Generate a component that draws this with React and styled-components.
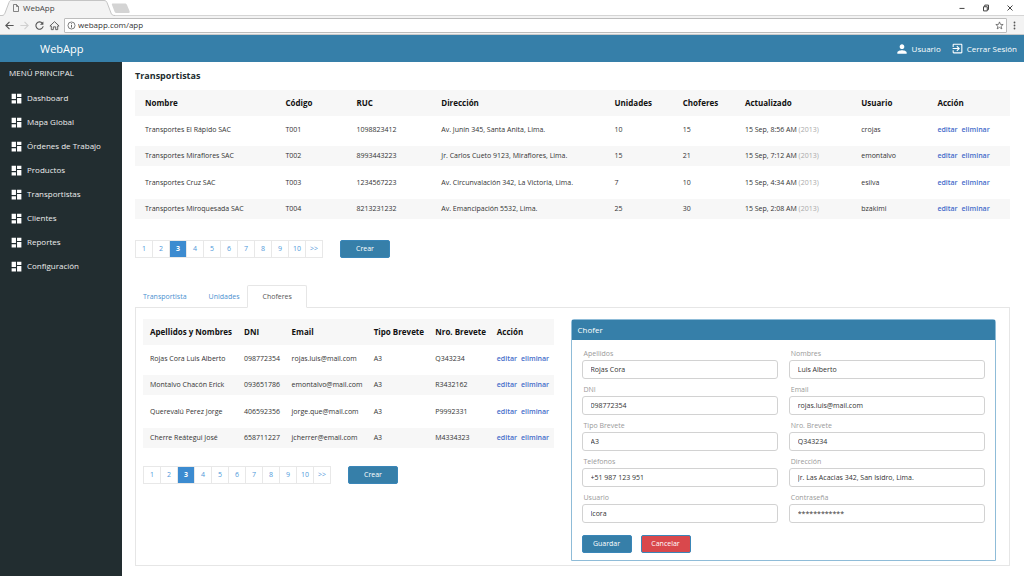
import { useState } from "react";
import styled, { createGlobalStyle } from "styled-components";
import { MdDashboard, MdExitToApp, MdPerson } from "react-icons/md";

const GlobalStyle = createGlobalStyle`
  * {
    box-sizing: border-box;
  }
  body {
    margin: 0;
    background-color: white;
    color: #333;
    font-family: "Open Sans", "Noto Sans", sans-serif;
    font-size: 7px;
    line-height: 10px;
  }
  button,
  input {
    font: inherit;
    color: inherit;
  }
  a {
    text-decoration: none;
  }
  h1,
  h2 {
    margin: 0;
  }
`;

/* browser window */
const Page = styled.div`
  min-height: 100vh;
  display: flex;
  flex-direction: column;
`;
const TabStrip = styled.div`
  height: 16px;
  display: flex;
  align-items: flex-end;
  justify-content: space-between;
  border-bottom: 1px solid #d5d5d5;
  .shapes {
    display: block;
  }
`;
const BrowserTab = styled.div`
  display: grid;
  height: 16px;
  margin-bottom: -1px;
  > * {
    grid-area: 1 / 1;
  }
  .label {
    display: flex;
    align-items: center;
    gap: 4px;
    padding-left: 13px;
    font-size: 8px;
    color: #444;
  }
`;
const WindowButtons = styled.div`
  display: flex;
  align-items: center;
  align-self: center;
  gap: 14px;
  padding-right: 9px;
  color: #444;
  button {
    display: flex;
    padding: 0;
    border: 0;
    background: none;
  }
`;
const Toolbar = styled.div`
  height: 19px;
  display: flex;
  align-items: center;
  gap: 4px;
  padding: 0 6px 0 4px;
  background-color: #f3f3f3;
  border-bottom: 1px solid #c9c9c9;
`;
const ToolButton = styled.button`
  display: flex;
  padding: 0;
  border: 0;
  background: none;
  color: ${(props) => (props.$off ? "#d0d0d0" : "#555")};
`;
const AddressBar = styled.div`
  flex: 1;
  height: 15px;
  display: flex;
  align-items: center;
  gap: 2px;
  padding: 0 2px;
  background-color: white;
  border: 1px solid #bdbdbd;
  border-radius: 1px;
  input {
    flex: 1;
    min-width: 0;
    padding: 0;
    border: 0;
    outline: 0;
    font-size: 8px;
    line-height: 12px;
    color: #333;
  }
`;

/* application frame */
const Header = styled.header`
  height: 27px;
  display: flex;
  align-items: center;
  justify-content: space-between;
  padding: 0 7px 0 40px;
  background-color: #367fa9;
  color: white;
  h1 {
    font-size: 11px;
    font-weight: 400;
    line-height: 16px;
  }
  nav {
    display: flex;
    gap: 10px;
  }
  a {
    display: flex;
    align-items: center;
    gap: 3px;
    color: white;
    font-size: 8px;
  }
`;
const Body = styled.div`
  flex: 1;
  display: flex;
`;
const Sidebar = styled.nav`
  flex: 0 0 122px;
  padding: 6px 9px;
  background-color: #222d30;
  color: #eee;
  font-size: 8px;
  p {
    margin: 0 0 8px;
  }
  a {
    height: 24px;
    display: flex;
    align-items: center;
    gap: 4px;
    padding-left: 1px;
    color: #eee;
  }
  svg {
    color: white;
  }
`;
const Main = styled.main`
  flex: 1;
  min-width: 0;
  padding: 8px 14px 10px 13px;
`;
const Title = styled.h2`
  margin-bottom: 8px;
  font-size: 9px;
  line-height: 12px;
  color: #222d30;
`;

/* tables */
const Table = styled.table`
  width: 100%;
  table-layout: fixed;
  border-collapse: collapse;
  white-space: nowrap;
  th,
  td {
    padding: 0;
    text-align: left;
  }
  th:first-child,
  td:first-child {
    padding-left: ${(props) => props.$indent};
  }
  th {
    height: 26px;
    background-color: #f7f7f7;
    color: #111;
    font-size: 8px;
    font-weight: 700;
  }
  tbody tr {
    height: 33px;
  }
  tbody tr:first-child {
    height: 30px;
  }
  tbody tr:first-child td {
    padding-bottom: 3px;
  }
  tbody tr:nth-child(even) {
    height: 20px;
    background-color: #f7f7f7;
  }
  .year {
    color: #aaa;
  }
`;
const Th = styled.th`
  width: ${(props) => props.$width};
`;
const Action = styled.a`
  margin-right: 4px;
  color: #456cca;
  font-weight: 600;
`;

/* pager and buttons */
const Footer = styled.div`
  display: flex;
  align-items: center;
  gap: 17px;
  margin-top: ${(props) => props.$space};
`;
const Pages = styled.div`
  display: flex;
  border: 1px solid #e8e8e8;
`;
const PageButton = styled.button`
  width: 17px;
  height: 16px;
  padding: 0;
  border: 0;
  border-left: 1px solid #e8e8e8;
  background-color: ${(props) => (props.$active ? "#3c8bd0" : "white")};
  color: ${(props) => (props.$active ? "white" : "#4f99da")};
  font-weight: ${(props) => (props.$active ? 700 : 400)};
  &:first-child {
    width: 16px;
    border-left: 0;
  }
`;
const Button = styled.button`
  width: 50px;
  height: 18px;
  padding: 0;
  border: 1px solid #3a86b8;
  border-radius: 2px;
  background-color: ${(props) => (props.$danger ? "#d9484c" : "#367fa9")};
  color: white;
`;

/* detail tabs */
const Tabs = styled.div`
  display: flex;
  margin-top: 27px;
  margin-bottom: -1px;
`;
const Tab = styled.button`
  height: 23px;
  padding: ${(props) => (props.$active ? "0 14px" : "0 7px")};
  border: 1px solid ${(props) => (props.$active ? "#e6e6e6" : "transparent")};
  border-bottom-color: ${(props) => (props.$active ? "white" : "transparent")};
  border-radius: 2px 2px 0 0;
  background-color: ${(props) => (props.$active ? "white" : "transparent")};
  color: ${(props) => (props.$active ? "#555" : "#4a90d0")};
  &:first-child {
    margin-right: 6px;
  }
`;
const Panel = styled.div`
  display: flex;
  gap: 17px;
  padding: 11px 13px 4px 7px;
  border: 1px solid #e6e6e6;
`;
const ListPart = styled.div`
  flex: 412 1 0;
  min-width: 0;
`;
const Card = styled.form`
  flex: 425 1 0;
  min-width: 0;
  border: 1px solid #8fbcd8;
  border-radius: 3px 3px 0 0;
  h2 {
    padding: 5px 6px;
    background-color: #367fa9;
    color: white;
    font-size: 8px;
    font-weight: 400;
  }
`;
const Fields = styled.div`
  display: grid;
  grid-template-columns: 1fr 1fr;
  gap: 6px 11px;
  padding: 9px 10px 12px;
`;
const Field = styled.label`
  display: flex;
  flex-direction: column;
  gap: 1px;
  color: #999;
  span {
    padding-left: 2px;
  }
  input {
    width: 100%;
    height: 19px;
    padding: 0 8px;
    border: 1px solid #d2d2d2;
    border-radius: 3px;
    color: #333;
  }
`;
const Buttons = styled.div`
  display: flex;
  gap: 9px;
  padding: 0 10px 7px;
`;

const menu = [
  "Dashboard",
  "Mapa Global",
  "Órdenes de Trabajo",
  "Productos",
  "Transportistas",
  "Clientes",
  "Reportes",
  "Configuración",
];

const companyColumns = [
  ["Nombre", "17.2%"],
  ["Código", "8.1%"],
  ["RUC", "9.7%"],
  ["Dirección", "19.8%"],
  ["Unidades", "7.8%"],
  ["Choferes", "7.1%"],
  ["Actualizado", "13.3%"],
  ["Usuario", "8.7%"],
  ["Acción", "8.3%"],
];
const companies = [
  ["Transportes El Rápido SAC", "T001", "1098823412", "Av. Junín 345, Santa Anita, Lima.", "10", "15", "8:56", "crojas"],
  ["Transportes Miraflores SAC", "T002", "8993443223", "Jr. Carlos Cueto 9123, Miraflores, Lima.", "15", "21", "7:12", "emontalvo"],
  ["Transportes Cruz SAC", "T003", "1234567223", "Av. Circunvalación 342, La Victoria, Lima.", "7", "10", "4:34", "esilva"],
  ["Transportes Miroquesada SAC", "T004", "8213231232", "Av. Emancipación 5532, Lima.", "25", "30", "2:08", "bzakimi"],
].map((row) =>
  row.map((cell, i) =>
    i === 6 ? (
      <>
        15 Sep, {cell} AM <span className="year">(2013)</span>
      </>
    ) : (
      cell
    )
  )
);

const driverColumns = [
  ["Apellidos y Nombres", "24.6%"],
  ["DNI", "11.6%"],
  ["Email", "20%"],
  ["Tipo Brevete", "15%"],
  ["Nro. Brevete", "15%"],
  ["Acción", "13.8%"],
];
const drivers = [
  ["Rojas Cora Luis Alberto", "098772354", "rojas.luis@mail.com", "A3", "Q343234"],
  ["Montalvo Chacón Erick", "093651786", "emontalvo@mail.com", "A3", "R3432162"],
  ["Querevalú Perez Jorge", "406592356", "jorge.que@mail.com", "A3", "P9992331"],
  ["Cherre Reátegui José", "658711227", "jcherrer@email.com", "A3", "M4334323"],
];

const fields = [
  ["Apellidos", "Rojas Cora"],
  ["Nombres", "Luis Alberto"],
  ["DNI", "098772354"],
  ["Email", "rojas.luis@mail.com"],
  ["Tipo Brevete", "A3"],
  ["Nro. Brevete", "Q343234"],
  ["Teléfonos", "+51 987 123 951"],
  ["Dirección", "Jr. Las Acacias 342, San Isidro, Lima."],
  ["Usuario", "lcora"],
  ["Contraseña", "************"],
];

const Line = ({ size = 10, box = 12, children }) => (
  <svg
    width={size}
    height={size}
    viewBox={`0 0 ${box} ${box}`}
    fill="none"
    stroke="currentColor"
    strokeWidth="1.2"
  >
    {children}
  </svg>
);

const Browser = () => (
  <>
    <TabStrip>
      <BrowserTab>
        <svg className="shapes" width="138" height="16" viewBox="0 0 138 16">
          <path
            d="M0 15.500H2C4 15.500 4.500 14 5 13L9 2.500C9.500 1 10 .5 11.500 .5H104C106 .5 106.500 1.500 107 2.500L111 13C111.500 14.500 112.500 15.500 115 15.500V16H0Z"
            fill="#f3f3f3"
          />
          <path
            d="M0 15.500H2C4 15.500 4.500 14 5 13L9 2.500C9.500 1 10 .5 11.500 .5H104C106 .5 106.500 1.500 107 2.500L111 13C111.500 14.500 112.500 15.500 115 15.500"
            fill="none"
            stroke="#c4c4c4"
          />
          <path
            d="M113 3.500H125C126 3.500 126.500 4 127 5L129.500 11C130 12.500 129.500 13 128.500 13H117C115.500 13 115 12.500 114.500 11.500L112 5C111.600 4 112 3.500 113 3.500Z"
            fill="#d4d4d4"
          />
        </svg>
        <div className="label">
          <svg width="6" height="8" viewBox="0 0 6 8" fill="none" stroke="#666">
            <path d="M.5 .5H3.500L5.500 2.500V7.500H.5ZM3.500 .5V2.500H5.500" strokeWidth=".8" />
          </svg>
          WebApp
        </div>
      </BrowserTab>
      <WindowButtons>
        <button aria-label="Minimizar">
          <Line>
            <path d="M3 6.500H9" />
          </Line>
        </button>
        <button aria-label="Restaurar">
          <Line>
            <path d="M3 4.500H7.500V9.500H3ZM4.500 4.500V2.500H9V8H7.500" />
          </Line>
        </button>
        <button aria-label="Cerrar">
          <Line>
            <path d="M3 3L9 9M9 3L3 9" />
          </Line>
        </button>
      </WindowButtons>
    </TabStrip>
    <Toolbar>
      <ToolButton aria-label="Atrás">
        <Line size={11}>
          <path d="M10.500 6H2M6 2L2 6L6 10" />
        </Line>
      </ToolButton>
      <ToolButton $off aria-label="Adelante">
        <Line size={11}>
          <path d="M1.500 6H10M6 2L10 6L6 10" />
        </Line>
      </ToolButton>
      <ToolButton aria-label="Recargar">
        <Line size={11}>
          <path d="M9.200 3.600A4 4 0 1 0 10 6.800" />
          <path d="M10.200 1.500V5.200H6.500Z" fill="currentColor" stroke="none" />
        </Line>
      </ToolButton>
      <ToolButton aria-label="Inicio">
        <Line size={11}>
          <path d="M1 6.500L6 1.800L11 6.500H9.500V10.500H7.300V7.500H4.700V10.500H2.500V6.500Z" strokeWidth="1" />
        </Line>
      </ToolButton>
      <AddressBar>
        <Line size={9}>
          <circle cx="6" cy="6" r="4.700" stroke="#555" strokeWidth="1" />
          <path d="M6 5.200V8.800M6 3V4.200" stroke="#555" />
        </Line>
        <input aria-label="Dirección web" defaultValue="webapp.com/app" />
        <Line size={9}>
          <path
            d="M6 1.200L7.300 4.500L10.900 4.700L8.100 7L9.100 10.500L6 8.500L2.900 10.500L3.900 7L1.100 4.700L4.700 4.500Z"
            stroke="#555"
            strokeWidth="1"
          />
        </Line>
      </AddressBar>
      <ToolButton aria-label="Menú">
        <svg width="7" height="9" viewBox="0 0 7 9" fill="#555">
          <circle cx="3.500" cy="1.500" r=".9" />
          <circle cx="3.500" cy="4.500" r=".9" />
          <circle cx="3.500" cy="7.500" r=".9" />
        </svg>
      </ToolButton>
    </Toolbar>
  </>
);

const DataTable = ({ columns, rows, indent }) => (
  <Table $indent={indent}>
    <thead>
      <tr>
        {columns.map(([name, width]) => (
          <Th key={name} $width={width}>
            {name}
          </Th>
        ))}
      </tr>
    </thead>
    <tbody>
      {rows.map((row) => (
        <tr key={row[0]}>
          {row.map((cell, i) => (
            <td key={i}>{cell}</td>
          ))}
          <td>
            <Action href="#editar">editar</Action>
            <Action href="#eliminar">eliminar</Action>
          </td>
        </tr>
      ))}
    </tbody>
  </Table>
);

const Pager = ({ space }) => {
  const [page, setPage] = useState(3);
  return (
    <Footer $space={space}>
      <Pages>
        {[1, 2, 3, 4, 5, 6, 7, 8, 9, 10].map((n) => (
          <PageButton key={n} $active={n === page} onClick={() => setPage(n)}>
            {n}
          </PageButton>
        ))}
        <PageButton onClick={() => setPage(Math.min(page + 1, 10))}>
          &gt;&gt;
        </PageButton>
      </Pages>
      <Button>Crear</Button>
    </Footer>
  );
};

export default function App() {
  const [tab, setTab] = useState("Choferes");
  return (
    <Page>
      <GlobalStyle />
      <Browser />
      <Header>
        <h1>WebApp</h1>
        <nav>
          <a href="#usuario">
            <MdPerson size={14} />
            Usuario
          </a>
          <a href="#salir">
            <MdExitToApp size={13} />
            Cerrar Sesión
          </a>
        </nav>
      </Header>
      <Body>
        <Sidebar>
          <p>MENÚ PRINCIPAL</p>
          {menu.map((item) => (
            <a key={item} href="#menu">
              <MdDashboard size={13} />
              {item}
            </a>
          ))}
        </Sidebar>
        <Main>
          <Title>Transportistas</Title>
          <DataTable columns={companyColumns} rows={companies} indent="10px" />
          <Pager space="21px" />
          <Tabs>
            {["Transportista", "Unidades", "Choferes"].map((name) => (
              <Tab
                key={name}
                $active={name === tab}
                onClick={() => setTab(name)}
              >
                {name}
              </Tab>
            ))}
          </Tabs>
          <Panel>
            <ListPart>
              <DataTable columns={driverColumns} rows={drivers} indent="7px" />
              <Pager space="18px" />
            </ListPart>
            <Card onSubmit={(e) => e.preventDefault()}>
              <h2>Chofer</h2>
              <Fields>
                {fields.map(([label, value]) => (
                  <Field key={label}>
                    <span>{label}</span>
                    <input defaultValue={value} />
                  </Field>
                ))}
              </Fields>
              <Buttons>
                <Button type="submit">Guardar</Button>
                <Button type="button" $danger>
                  Cancelar
                </Button>
              </Buttons>
            </Card>
          </Panel>
        </Main>
      </Body>
    </Page>
  );
}
